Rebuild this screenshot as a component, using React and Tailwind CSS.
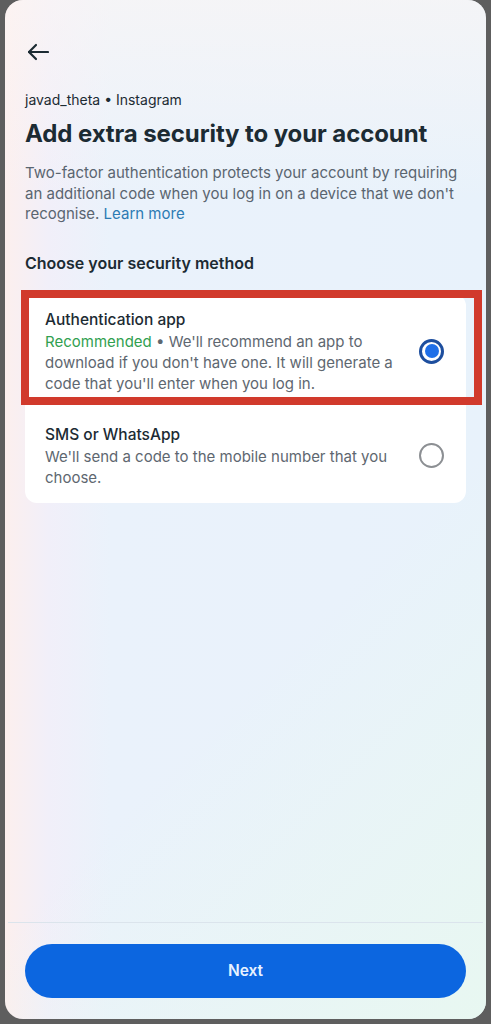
import React from "react";

function Radio({ checked }) {
  if (checked) {
    return (
      <div className="w-[25px] h-[25px] rounded-full border-[3px] border-[#1d4e9e] bg-white flex items-center justify-center">
        <div className="w-[14px] h-[14px] rounded-full bg-[#1f6fe8]" />
      </div>
    );
  }
  return <div className="w-[25px] h-[25px] rounded-full border-[2px] border-[#8c8f93] bg-white" />;
}

export default function App() {
  return (
    <div className="w-[491px] h-[1024px] bg-[#5e5e5e] px-[5px] pb-[5px] font-['Inter',sans-serif]">
      <div className="relative h-[1019px] rounded-[18px] overflow-hidden flex flex-col bg-[linear-gradient(90deg,#fcefee_0%,#f1eff9_9%,#eaf2fb_22%,#e9f2fb_70%,#e8f2fb_100%)]">
        <div className="absolute inset-0 bg-[linear-gradient(135deg,rgba(255,255,255,0)_62%,rgba(232,248,240,0.9)_100%)]" />
        <div className="absolute inset-x-0 top-0 h-[200px] bg-[linear-gradient(180deg,rgba(252,246,244,0.6)_0%,rgba(255,255,255,0)_100%)]" />
        <div className="relative flex-1 flex flex-col px-[20px]">
          <div className="mt-[41px] h-[22px] flex items-center pl-[2px]">
            <svg width="22" height="18" viewBox="0 0 22 18" fill="none" stroke="#1c2b33" strokeWidth="2.2" strokeLinecap="round" strokeLinejoin="round">
              <path d="M21 9H2" />
              <path d="M9 2L2 9l7 7" />
            </svg>
          </div>
          <div className="mt-[28px] text-[14px] leading-[18px] text-[#1c2b33]">javad_theta • Instagram</div>
          <h1 className="mt-[10px] text-[24px] leading-[30px] font-bold text-[#1c2b33] tracking-[-0.1px]">
            Add extra security to your account
          </h1>
          <p className="mt-[14px] text-[15px] leading-[20.5px] text-[#5a6570]">
            Two-factor authentication protects your account by requiring an additional code when you log in on a device that we don't recognise.{" "}
            <span className="text-[#2c7bb3]">Learn more</span>
          </p>
          <div className="mt-[27px] text-[16px] leading-[22px] font-semibold text-[#1c2b33]">Choose your security method</div>
          <div className="relative mt-[20px] bg-white rounded-[12px] flex flex-col">
            <div className="flex items-center pl-[20px] pr-[22px] pt-[15px] pb-[15px]">
              <div className="flex-1 pr-[12px]">
                <div className="text-[15.5px] leading-[22px] font-medium text-[#1c2b33]">Authentication app</div>
                <div className="text-[15px] leading-[21px] text-[#5e6770]">
                  <span className="text-[#31a04f]">Recommended</span> • We'll recommend an app to download if you don't have one. It will generate a code that you'll enter when you log in.
                </div>
              </div>
              <Radio checked />
            </div>
            <div className="flex items-center pl-[20px] pr-[22px] pt-[15px] pb-[15px]">
              <div className="flex-1 pr-[12px]">
                <div className="text-[15.5px] leading-[22px] font-medium text-[#1c2b33]">SMS or WhatsApp</div>
                <div className="text-[15px] leading-[21px] text-[#5e6770]">
                  We'll send a code to the mobile number that you choose.
                </div>
              </div>
              <Radio checked={false} />
            </div>
            <div className="absolute left-[-4px] right-[-16px] top-[-4px] h-[115px] border-[8px] border-[#d13a2c] pointer-events-none" />
          </div>
        </div>
        <div className="relative h-px bg-[#dbe4ec] mx-[3px]" />
        <div className="relative px-[20px] pt-[21px] pb-[21px]">
          <button className="w-full h-[54px] rounded-full bg-[#0c66e0] text-[#e8f2ff] text-[15.5px] font-semibold">
            Next
          </button>
        </div>
      </div>
    </div>
  );
}
